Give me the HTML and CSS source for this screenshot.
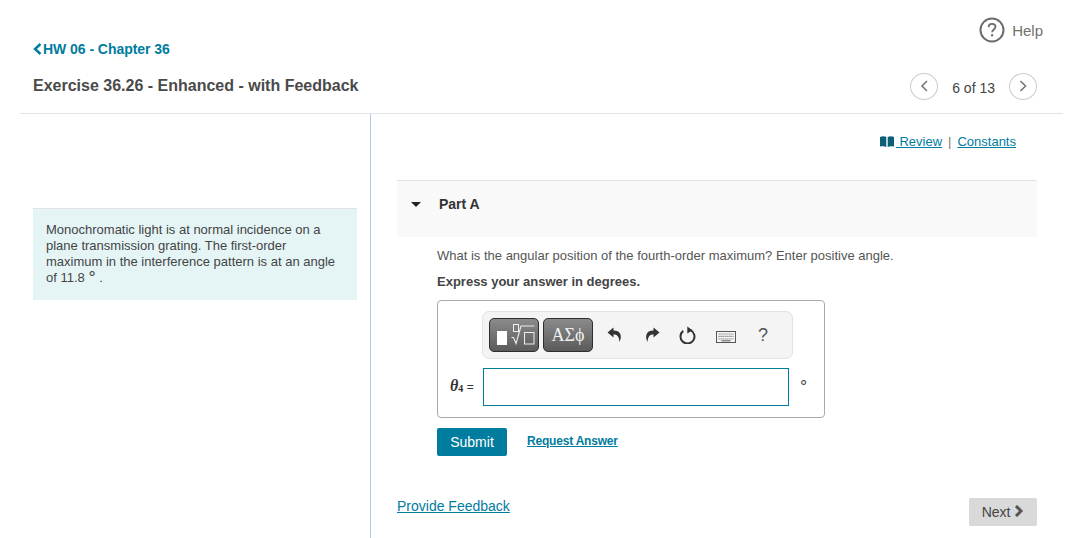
FILE: index.html
```html
<!DOCTYPE html>
<html lang="en">
<head>
<meta charset="utf-8">
<title>Exercise 36.26</title>
<link rel="stylesheet" href="styles.css">
</head>
<body>
<div class="page">
  <header class="header">
    <div class="help-row">
      <svg class="help-icon" width="26" height="26" viewBox="0 0 26 26"><circle cx="13" cy="13" r="11.500" fill="none" stroke="#6b6b6b" stroke-width="2"/><path d="M9.600 10.200c0-2.200 1.500-3.400 3.500-3.400s3.400 1.200 3.400 3c0 2.600-3.400 2.700-3.400 5.400" fill="none" stroke="#6b6b6b" stroke-width="1.800"/><rect x="12.100" y="17.200" width="2" height="2.200" fill="#6b6b6b"/></svg>
      <span class="help-text">Help</span>
    </div>
    <div class="crumb-row">
      <svg class="crumb-icon" width="9" height="12" viewBox="0 0 9 12"><path d="M7.500 1 2 6l5.500 5" fill="none" stroke="#007c9e" stroke-width="2.400"/></svg>
      <a class="crumb">HW 06 - Chapter 36</a>
    </div>
    <div class="title-row">
      <h1 class="title">Exercise 36.26 - Enhanced - with Feedback</h1>
      <div class="pager">
        <span class="pager-btn"><svg width="10" height="14" viewBox="0 0 10 14"><path d="M8 2 3 7l5 5" fill="none" stroke="#777" stroke-width="1.600"/></svg></span>
        <span class="pager-text">6 of 13</span>
        <span class="pager-btn"><svg width="10" height="14" viewBox="0 0 10 14"><path d="M2.500 2l5 5-5 5" fill="none" stroke="#777" stroke-width="1.600"/></svg></span>
      </div>
    </div>
  </header>
  <main class="main">
    <aside class="left">
      <div class="intro">Monochromatic light is at normal incidence on a plane transmission grating. The first-order maximum in the interference pattern is at an angle of 11.8 <span class="deg">&deg;</span> .</div>
    </aside>
    <section class="right">
      <div class="links">
        <svg class="book" width="14" height="11" viewBox="0 0 14 11"><path d="M0 1c2-1 4.500-1 6.300 0v10C4.500 10 2 10 0 10.500zM14 1c-2-1-4.500-1-6.300 0v10c1.800-1 4.300-1 6.300-.5z" fill="#0b6078"/></svg>
        <a class="link">&nbsp;Review</a>
        <span class="sep">|</span>
        <a class="link">Constants</a>
      </div>
      <div class="part-head">
        <span class="caret"></span>
        <span class="part-name">Part A</span>
      </div>
      <div class="part-body">
        <p class="question">What is the angular position of the fourth-order maximum? Enter positive angle.</p>
        <p class="instruction">Express your answer in degrees.</p>
        <div class="answer-box">
          <div class="toolbar">
            <span class="tool-btn tool-math">
              <svg width="42" height="26" viewBox="0 0 42 26"><rect x="4" y="9" width="10" height="14" fill="#fff"/><rect x="20.500" y="2.500" width="5" height="7" fill="none" stroke="#eee"/><path d="M18.500 15.500h2l2.500 6 5-17.500h13.500" fill="none" stroke="#eee" stroke-width="1.100"/><rect x="31.500" y="10.500" width="9.500" height="11.500" fill="none" stroke="#eee"/></svg>
            </span>
            <span class="tool-btn tool-greek">&Alpha;&Sigma;&#981;</span>
            <svg class="tool-undo" width="16" height="16" viewBox="0 0 16 16"><path d="M7.500.5 1.500 5.500l6 5v-3c3.500 0 5.500 1.500 6 7.500 2.500-5 2-11.500-6-11.500z" fill="#333"/></svg>
            <svg class="tool-redo" width="16" height="16" viewBox="0 0 16 16"><path d="M8.500.5l6 5-6 5v-3c-3.500 0-5.500 1.500-6 7.500C0 10 .5 3.500 8.500 3.500z" fill="#333"/></svg>
            <svg class="tool-reset" width="18" height="18" viewBox="0 0 18 18"><path d="M11.500 4.200A7 7 0 1 1 4.300 4.900" fill="none" stroke="#333" stroke-width="2"/><path d="M8.300.5l5.200 3.700-5.200 3.300z" fill="#333"/></svg>
            <svg class="tool-keys" width="20" height="12" viewBox="0 0 20 12"><rect x=".5" y=".5" width="19" height="11" fill="#f6f6f6" stroke="#555"/><path d="M2.500 3h15M2.500 5.300h15" stroke="#777" stroke-width="1.200" stroke-dasharray="1.200 .8"/><path d="M2.500 7.800h15" stroke="#888" stroke-width="1.200" stroke-dasharray="1.200 .8"/><path d="M5.500 9.800h9" stroke="#666" stroke-width="1.100"/></svg>
            <span class="tool-q">?</span>
          </div>
          <div class="answer-row">
            <span class="var"><i>&theta;</i><sub>4</sub><span class="eq"> =</span></span>
            <input class="answer-input" type="text" aria-label="answer">
            <span class="unit">&deg;</span>
          </div>
        </div>
        <div class="actions">
          <button class="submit" type="button">Submit</button>
          <a class="request">Request Answer</a>
        </div>
      </div>
      <div class="footer">
        <a class="feedback">Provide Feedback</a>
        <button class="next" type="button">Next <svg width="10" height="12" viewBox="0 0 10 12"><path d="M2 1l5 5-5 5" fill="none" stroke="#555" stroke-width="3"/></svg></button>
      </div>
    </section>
  </main>
</div>
</body>
</html>
```
FILE: styles.css
```css
* { box-sizing: border-box; }
html, body { margin: 0; padding: 0; }
body {
  width: 1074px;
  height: 538px;
  overflow: hidden;
  background: #fff;
  font-family: "Liberation Sans", Arial, sans-serif;
  color: #444;
}
a { cursor: pointer; }
.page { padding: 0 11px 0 20px; }
.header {
  height: 114px;
  border-bottom: 1px solid #dfe3e8;
  padding: 17px 26px 0 13px;
}
.help-row {
  display: flex;
  justify-content: flex-end;
  align-items: center;
  gap: 7px;
  height: 26px;
  margin-right: -6px;
}
.help-text { font-size: 15px; color: #707070; }
.crumb-row {
  display: flex;
  align-items: center;
  gap: 1px;
  height: 16px;
  margin-top: -2px;
}
.crumb { font-size: 14px; letter-spacing: -0.05px; font-weight: 700; color: #007c9e; }
.title-row {
  display: flex;
  justify-content: space-between;
  align-items: center;
  height: 30px;
  margin-top: 14px;
}
.title { margin: 0; font-size: 16px; font-weight: 700; color: #4a4a4a; }
.pager { display: flex; align-items: center; }
.pager-btn {
  display: flex;
  align-items: center;
  justify-content: center;
  width: 28px;
  height: 27px;
  border: 1px solid #ccc;
  border-radius: 50%;
}
.pager-text { font-size: 14px; color: #444; margin: 3px 14px 0 14px; }
.main { display: flex; height: 424px; }
.left {
  width: 351px;
  border-right: 1px solid #b8cde0;
  padding: 94px 13px 0 13px;
}
.intro {
  width: 324px;
  height: 92px;
  background: #e5f5f6;
  border-top: 1px solid #dfe3e8;
  padding: 13px 13px 0;
  font-size: 13px;
  line-height: 16px;
  color: #444;
}
.deg { font-size: 18px; line-height: 0; vertical-align: -2px; }
.right { width: 666px; padding: 0 0 0 26px; }
.links {
  display: flex;
  justify-content: flex-end;
  align-items: center;
  gap: 6px;
  height: 16px;
  margin-top: 19px;
  padding-right: 21px;
  font-size: 13px;
}
.book { margin-right: -4px; }
.link { color: #007c9e; text-decoration: underline; }
.sep { color: #777; }
.part-head {
  display: flex;
  align-items: flex-start;
  height: 57px;
  margin-top: 31px;
  background: #f9f9f9;
  border-top: 1px solid #e3e3e3;
  padding: 15px 0 0 14px;
}
.caret {
  width: 0;
  height: 0;
  margin-top: 6px;
  border-left: 5.500px solid transparent;
  border-right: 5.500px solid transparent;
  border-top: 5px solid #222;
}
.part-name { margin-left: 18px; font-size: 14px; font-weight: 700; color: #333; }
.part-body { padding-left: 40px; }
.question { margin: 11px 0 0; font-size: 13px; line-height: 16px; color: #555; }
.instruction { margin: 10px 0 0; font-size: 13px; line-height: 16px; font-weight: 700; color: #444; }
.answer-box {
  width: 388px;
  height: 118px;
  margin-top: 10px;
  border: 1px solid #aaa;
  border-radius: 4px;
  padding: 10px 0 0 12px;
}
.toolbar {
  display: flex;
  align-items: center;
  width: 311px;
  height: 48px;
  margin-left: 32px;
  padding-left: 6px;
  background: #f4f4f4;
  border: 1px solid #e2e2e2;
  border-radius: 7px;
}
.tool-btn {
  display: flex;
  align-items: center;
  justify-content: center;
  width: 50px;
  height: 34px;
  border: 1px solid #2e2e2e;
  border-radius: 5px;
  background: linear-gradient(#8b8b8b, #5b5b5b);
  color: #f0f0f0;
}
.tool-greek {
  margin-left: 4px;
  font-family: "Liberation Serif", serif;
  font-size: 18px;
}
.tool-undo { margin-left: 13px; }
.tool-redo { margin-left: 23px; }
.tool-reset { margin-left: 18px; }
.tool-keys { margin: 3px 0 0 19px; }
.tool-q { margin: 0 0 0 22px; font-size: 18px; color: #555; }
.answer-row { display: flex; align-items: center; margin-top: 9px; height: 38px; }
.var {
  width: 33px;
  margin-top: -2px;
  font-family: "Liberation Serif", serif;
  font-size: 16px;
  font-weight: 700;
  line-height: 16px;
  color: #333;
  white-space: nowrap;
}
.var sub { font-size: 10px; line-height: 0; vertical-align: -1px; }
.eq { font-family: "Liberation Sans", sans-serif; font-size: 12px; font-weight: 400; }
.answer-input {
  width: 306px;
  height: 38px;
  border: 1px solid #007c9e;
  background: #fff;
  outline: none;
}
.unit { margin: 0 0 0 11px; font-size: 18px; color: #444; }
.actions { display: flex; align-items: flex-start; margin-top: 10px; }
.submit {
  width: 70px;
  height: 28px;
  background: #007c9e;
  border: none;
  border-radius: 2px;
  color: #fff;
  font: 14px "Liberation Sans", sans-serif;
}
.request {
  margin: 6px 0 0 20px;
  font-size: 12px;
  letter-spacing: -0.2px;
  font-weight: 700;
  color: #007c9e;
  text-decoration: underline;
}
.footer {
  display: flex;
  justify-content: space-between;
  align-items: flex-start;
  margin-top: 42px;
}
.feedback { font-size: 14px; color: #007c9e; text-decoration: underline; }
.next {
  width: 68px;
  height: 28px;
  background: #d9d9d9;
  border: none;
  border-radius: 2px;
  color: #444;
  font: 14px "Liberation Sans", sans-serif;
}
```
